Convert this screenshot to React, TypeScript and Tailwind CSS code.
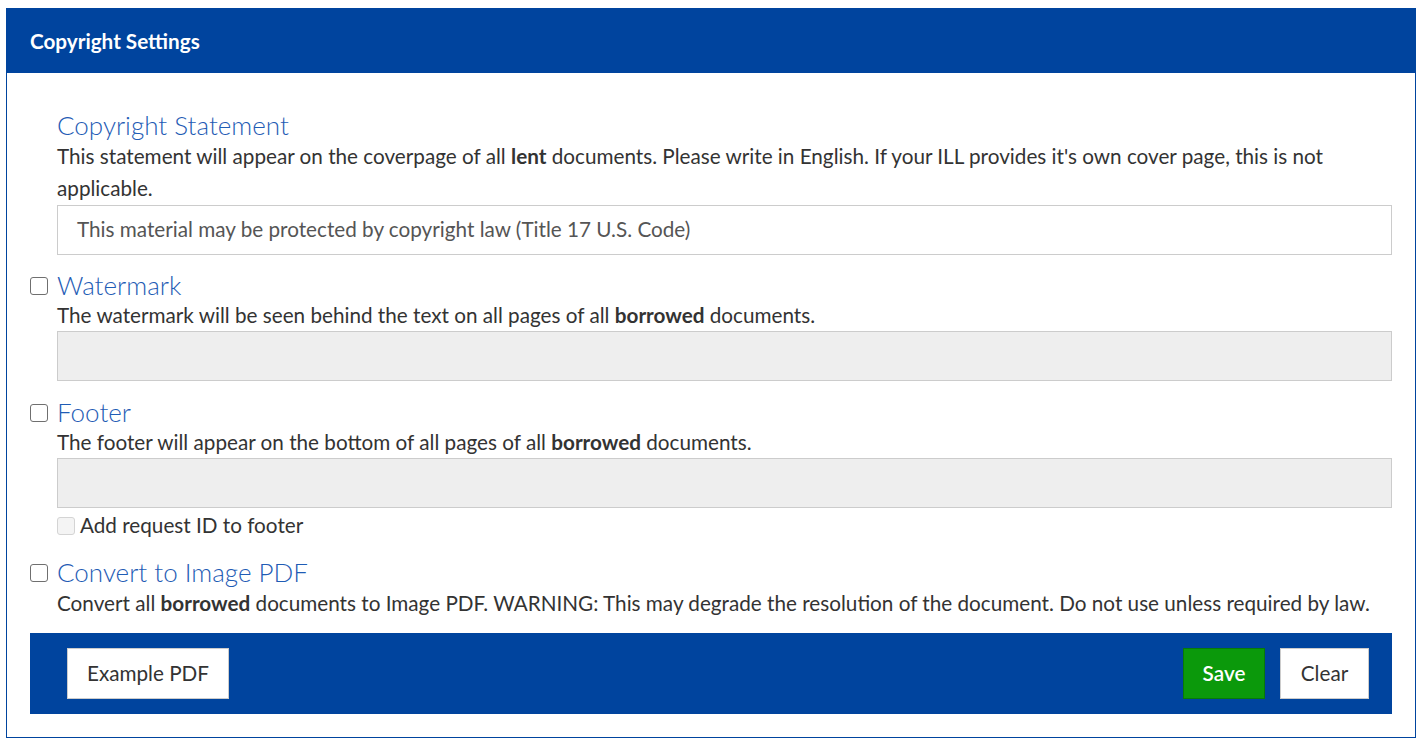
import { FC, ReactNode } from 'react';

const font = { fontFamily: 'Lato, "Open Sans", sans-serif' };

const Box: FC<{ disabled?: boolean }> = ({ disabled }) => (
  <span
    className={
      disabled
        ? 'inline-block w-[18px] h-[18px] rounded-[3px] border border-[#d4d4d4] bg-[#f4f4f4]'
        : 'inline-block w-[18px] h-[18px] rounded-[3px] border border-[#6f6f6f] bg-white'
    }
  />
);

interface SectionProps {
  title: string;
  checkbox?: boolean;
  children: ReactNode;
}

const Section: FC<SectionProps> = ({ title, checkbox, children }) => (
  <div>
    <div className="flex items-center h-[30px]">
      <div className="w-[27px] flex items-center pt-[2px]">{checkbox && <Box />}</div>
      <h4 className="text-[26px] leading-[30px] font-light text-[#1f5cb5]">{title}</h4>
    </div>
    <div className="pl-[27px]">{children}</div>
  </div>
);

const App: FC = () => {
  return (
    <div className="bg-white min-h-screen pl-[6px] pt-[8px]" style={font}>
      <div className="w-[1410px] border border-[#00449e] bg-white">
        {/* Header */}
        <div className="h-[64px] bg-[#00449e] flex items-center pl-[23px] pt-[2px]">
          <h3 className="text-white text-[20.7px] font-bold">Copyright Settings</h3>
        </div>

        <div className="px-[23px] pt-[37px] pb-[23px] text-[20.7px] text-[#333]">
          <Section title="Copyright Statement">
            <p className="leading-[32px]">
              This statement will appear on the coverpage of all <b>lent</b> documents. Please write in English. If your ILL provides it's own cover page, this is not applicable.
            </p>
            <div className="mt-px h-[50px] border border-[#ccc] flex items-center px-[19px] text-[#555]">
              This material may be protected by copyright law (Title 17 U.S. Code)
            </div>
          </Section>

          <div className="mt-[15px]">
            <Section title="Watermark" checkbox>
              <p className="leading-[31px]">
                The watermark will be seen behind the text on all pages of all <b>borrowed</b> documents.
              </p>
              <div className="h-[50px] border border-[#ccc] bg-[#eee]" />
            </Section>
          </div>

          <div className="mt-[16px]">
            <Section title="Footer" checkbox>
              <p className="leading-[31px]">
                The footer will appear on the bottom of all pages of all <b>borrowed</b> documents.
              </p>
              <div className="h-[50px] border border-[#ccc] bg-[#eee]" />
              <div className="flex items-center gap-[5px] h-[28px] mt-[4px]">
                <Box disabled />
                <span>Add request ID to footer</span>
              </div>
            </Section>
          </div>

          <div className="mt-[17px]">
            <Section title="Convert to Image PDF" checkbox>
              <p className="leading-[32px]">
                Convert all <b>borrowed</b> documents to Image PDF. WARNING: This may degrade the resolution of the document. Do not use unless required by law.
              </p>
            </Section>
          </div>

          {/* Actions */}
          <div className="mt-[14px] h-[81px] bg-[#00449e] flex items-center justify-between pl-[37px] pr-[23px]">
            <button className="h-[51px] w-[162px] bg-white border border-[#ccc] text-[20.7px] text-[#333]">
              Example PDF
            </button>
            <div className="flex items-center gap-[15px]">
              <button className="h-[51px] w-[82px] bg-[#0b990b] border border-[#087a08] text-[20.7px] font-semibold text-white">
                Save
              </button>
              <button className="h-[51px] w-[89px] bg-white border border-[#ccc] text-[20.7px] text-[#333]">
                Clear
              </button>
            </div>
          </div>
        </div>
      </div>
    </div>
  );
};

export default App;
